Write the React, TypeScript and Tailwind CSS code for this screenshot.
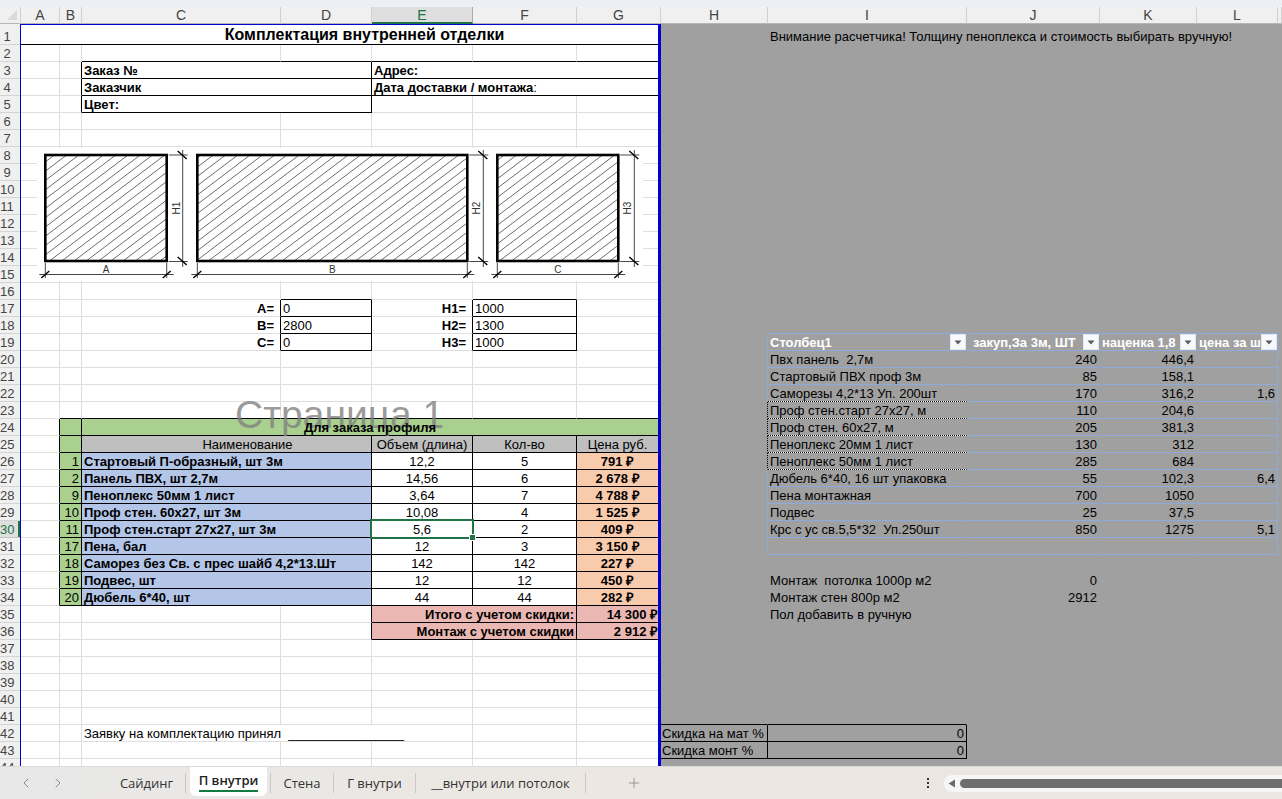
import type { ReactNode } from 'react';
import { ChevronLeft, ChevronRight, Plus } from 'lucide-react';
import { twMerge } from 'tailwind-merge';

const COLUMNS = ['A', 'B', 'C', 'D', 'E', 'F', 'G', 'H', 'I', 'J', 'K', 'L', 'M'];
const COLUMN_WIDTHS = [
  'w-[39px]',
  'w-[22px]',
  'w-[199px]',
  'w-[91px]',
  'w-[101px]',
  'w-[104px]',
  'w-[84px]',
  'w-[107px]',
  'w-[199px]',
  'w-[133px]',
  'w-[97px]',
  'w-[81px]',
  'w-auto',
];
const ROW_COUNT = 44;
const LAST_PRINT_COLUMN = COLUMNS.indexOf('G');

// anchor cell -> number of columns it covers
const MERGES: Record<string, number> = {
  A1: 7,
  I1: 4,
  C3: 2,
  E3: 3,
  C4: 2,
  E4: 3,
  C5: 2,
  C24: 5,
  E35: 2,
  E36: 2,
  C42: 3,
};
for (let row = 25; row <= 34; row++) MERGES[`C${row}`] = 2;

const DOTTED =
  'border-b-black [border-bottom-style:dotted] bg-[linear-gradient(#fff,#fff)] bg-origin-border bg-bottom bg-no-repeat bg-[length:100%_1px]';

// range -> classes, later rules win
const FORMATS: [string, string][] = [
  ['A1:A1', 'border-b-black pl-[52px] text-center align-top text-base leading-[18px] font-bold'],
  ['H1:M1', 'align-bottom'],
  ['C2:G2', 'border-b-black'],
  ['B3:B5', 'border-r-black'],
  ['C3:C5', 'border-b-black border-r-black font-bold'],
  ['E3:E4', 'border-b-black font-bold'],
  ['C17:C19', 'border-r-black pr-[6px] text-right font-bold'],
  ['E17:E19', 'border-r-black pr-[6px] text-right font-bold'],
  ['D16:D16', 'border-b-black'],
  ['F16:F16', 'border-b-black'],
  ['D17:D19', 'border-r-black border-b-black'],
  ['F17:F19', 'border-r-black border-b-black'],
  ['B23:G23', 'border-b-black'],
  ['A24:A34', 'border-r-black'],
  ['B24:B34', 'border-r-black border-b-black bg-[#a9d08e] text-right'],
  ['C24:C24', 'border-b-black bg-[#a9d08e] text-center font-bold'],
  ['C25:G25', 'border-r-black border-b-black bg-[#bfbfbf] text-center'],
  ['C25:C25', 'pl-11'],
  ['C26:C34', 'border-r-black border-b-black bg-[#b4c6e7] font-bold'],
  ['E26:F34', 'border-r-black border-b-black text-center'],
  ['G26:G34', 'border-b-black bg-[#f8cbad] text-center font-bold'],
  ['D35:D36', 'border-r-black'],
  ['E35:G36', 'border-r-black border-b-black bg-[#ebb7b2] text-right font-bold'],
  ['G35:G36', 'pr-0'],
  ['H19:H31', 'border-r-[#8ea9db]'],
  ['I18:L31', 'border-b-[#8ea9db]'],
  ['L19:L31', 'border-r-[#8ea9db]'],
  ['I19:L19', 'pt-0 font-bold text-white'],
  ['J19:J19', 'pl-[6px]'],
  ['J20:L34', 'text-right'],
  ['I22:I26', DOTTED],
  ['H23:H26', 'border-r-black [border-right-style:dotted]'],
  ['H41:I41', 'border-b-black'],
  ['H42:I43', 'border-r-black border-b-black'],
  ['H42:H43', 'px-px'],
  ['I42:I43', 'text-right'],
];

const VALUES: Record<string, ReactNode> = {
  A1: 'Комплектация внутренней отделки',
  I1: 'Внимание расчетчика! Толщину пеноплекса и стоимость выбирать вручную!',
  C3: 'Заказ №',
  C4: 'Заказчик',
  C5: 'Цвет:',
  E3: 'Адрес:',
  E4: (
    <>
      Дата доставки / монтажа<span className="font-normal">:</span>
    </>
  ),
  C17: 'A=',
  C18: 'B=',
  C19: 'C=',
  D17: '0',
  D18: '2800',
  D19: '0',
  E17: 'H1=',
  E18: 'H2=',
  E19: 'H3=',
  F17: '1000',
  F18: '1300',
  F19: '1000',
  C24: <span className="relative z-10">Для заказа профиля</span>,
  C25: 'Наименование',
  E25: 'Объем (длина)',
  F25: 'Кол-во',
  G25: 'Цена руб.',
  E35: 'Итого с учетом скидки:',
  G35: '14 300 ₽',
  E36: 'Монтаж с учетом скидки',
  G36: '2 912 ₽',
  C42: 'Заявку на комплектацию принял  ________________',
  H42: 'Скидка на мат %',
  I42: '0',
  H43: 'Скидка монт %',
  I43: '0',
  I19: <FilterHeader label="Столбец1" />,
  J19: <FilterHeader label="закуп,За 3м, ШТ" />,
  K19: <FilterHeader label="наценка 1,8" />,
  L19: <FilterHeader label="цена за шт" />,
};

function fill(startColumn: string, startRow: number, rows: string[][]) {
  const first = COLUMNS.indexOf(startColumn);
  rows.forEach((row, y) =>
    row.forEach((value, x) => {
      if (value) VALUES[`${COLUMNS[first + x]}${startRow + y}`] = value;
    }),
  );
}

fill('B', 26, [
  ['1', 'Стартовый П-образный, шт 3м', '', '12,2', '5', '791 ₽'],
  ['2', 'Панель ПВХ, шт 2,7м', '', '14,56', '6', '2 678 ₽'],
  ['9', 'Пеноплекс 50мм 1 лист', '', '3,64', '7', '4 788 ₽'],
  ['10', 'Проф стен. 60х27, шт 3м', '', '10,08', '4', '1 525 ₽'],
  ['11', 'Проф стен.старт 27х27, шт 3м', '', '5,6', '2', '409 ₽'],
  ['17', 'Пена, бал', '', '12', '3', '3 150 ₽'],
  ['18', 'Саморез без Св. с прес шайб 4,2*13.Шт', '', '142', '142', '227 ₽'],
  ['19', 'Подвес, шт', '', '12', '12', '450 ₽'],
  ['20', 'Дюбель 6*40, шт', '', '44', '44', '282 ₽'],
]);

fill('I', 20, [
  ['Пвх панель  2,7м', '240', '446,4', ''],
  ['Стартовый ПВХ проф 3м', '85', '158,1', ''],
  ['Саморезы 4,2*13 Уп. 200шт', '170', '316,2', '1,6'],
  ['Проф стен.старт 27х27, м', '110', '204,6', ''],
  ['Проф стен. 60х27, м', '205', '381,3', ''],
  ['Пеноплекс 20мм 1 лист', '130', '312', ''],
  ['Пеноплекс 50мм 1 лист', '285', '684', ''],
  ['Дюбель 6*40, 16 шт упаковка', '55', '102,3', '6,4'],
  ['Пена монтажная', '700', '1050', ''],
  ['Подвес', '25', '37,5', ''],
  ['Крс с ус св.5,5*32  Уп.250шт', '850', '1275', '5,1'],
]);

fill('I', 33, [
  ['Монтаж  потолка 1000р м2', '0'],
  ['Монтаж стен 800р м2', '2912'],
  ['Пол добавить в ручную', ''],
]);

function inRange(range: string, column: number, row: number) {
  const [from, to] = range.split(':');
  return (
    column >= COLUMNS.indexOf(from[0]) &&
    column <= COLUMNS.indexOf(to[0]) &&
    row >= Number(from.slice(1)) &&
    row <= Number(to.slice(1))
  );
}

function cellClass(column: number, row: number, span: number) {
  const rules = FORMATS.filter(([range]) => inRange(range, column, row)).map(([, classes]) => classes);
  const inPrintArea = column <= LAST_PRINT_COLUMN;
  return twMerge(
    'overflow-hidden border-r border-b px-0.5 pt-0.5 pb-0 leading-[14px] whitespace-pre',
    inPrintArea ? 'border-[#dedede] bg-white' : 'border-[#a0a0a0] bg-[#a0a0a0]',
    ...rules,
    column + span - 1 === LAST_PRINT_COLUMN && 'border-r-[3px] border-r-[#0000d4]',
  );
}

function FilterHeader({ label }: { label: string }) {
  return (
    <div className="flex h-4 items-center justify-between">
      <span className="min-w-0 overflow-hidden pt-0.5">{label}</span>
      <button
        type="button"
        aria-label={label}
        className="-mr-0.5 flex h-4 w-4 shrink-0 items-center justify-center border border-[#e3e6ee] bg-[#f8f9fc]"
      >
        <svg width="8" height="5" viewBox="0 0 8 5" aria-hidden="true">
          <path d="M0.5 0.5h7L4 4.5z" fill="#5a5a5a" />
        </svg>
      </button>
    </div>
  );
}

function ActiveCell({ children }: { children: ReactNode }) {
  return (
    <div className="relative pt-0.5">
      {children}
      <div className="absolute -inset-0.5 z-10 border-2 border-[#217346]">
        <div className="absolute -right-1 -bottom-1 h-[7px] w-[7px] border border-white bg-[#217346]" />
      </div>
    </div>
  );
}

interface WallProps {
  id: string;
  left: number;
  right: number;
  hatch: number;
  label: string;
  heightLabel: string;
}

const WALLS: WallProps[] = [
  { id: 'wall-a', left: 45.3, right: 166.7, hatch: 4.1, label: 'A', heightLabel: 'H1' },
  { id: 'wall-b', left: 197.3, right: 467.3, hatch: 11, label: 'B', heightLabel: 'H2' },
  { id: 'wall-c', left: 497.3, right: 618.3, hatch: 2, label: 'C', heightLabel: 'H3' },
];

function Wall({ id, left, right, hatch, label, heightLabel }: WallProps) {
  const top = 155;
  const bottom = 261;
  const step = 12.27;
  const run = 140;
  const dimX = right + 16;
  const dimY = 274.5;
  const count = Math.ceil((right - left + run) / step);
  return (
    <g>
      <clipPath id={id}>
        <rect x={left} y={top} width={right - left} height={bottom - top} />
      </clipPath>
      <g clipPath={`url(#${id})`} stroke="#5c5c5c" strokeWidth="0.9">
        {Array.from({ length: count }, (_, i) => {
          const x = left - run + ((hatch + run) % step) + i * step;
          return <line key={i} x1={x} y1={bottom} x2={x + run} y2={top} />;
        })}
      </g>
      <rect x={left} y={top} width={right - left} height={bottom - top} fill="none" stroke="#000" strokeWidth="2.6" />
      <g stroke="#333" strokeWidth="0.9">
        <path d={`M${left - 6} ${dimY}H${right + 7}M${left} 263V278M${right} 263V278`} />
        <path d={`M${dimX} 150V267M${right + 2} ${top}H${dimX + 5}M${right + 2} 261.5H${dimX + 5}`} />
      </g>
      <g stroke="#000" strokeWidth="1.4">
        <path d={`M${left - 4} 278L${left + 4} 271M${right - 4} 278L${right + 4} 271`} />
        <path d={`M${dimX - 5} 151L${dimX + 4} 159M${dimX - 5} 257L${dimX + 4} 265`} />
      </g>
      <g fill="#333" fontSize="10" textAnchor="middle">
        <text x={(left + right) / 2} y="273">
          {label}
        </text>
        <text x={dimX - 3} y="208" transform={`rotate(-90 ${dimX - 3} 208)`}>
          {heightLabel}
        </text>
      </g>
    </g>
  );
}

function WallsDrawing() {
  return (
    <svg
      className="absolute top-[141px] left-[37px] bg-white"
      width="606"
      height="133"
      viewBox="37 148 606 133"
      role="img"
      aria-label="A B C"
    >
      {WALLS.map((wall) => (
        <Wall key={wall.id} {...wall} />
      ))}
    </svg>
  );
}

function ColumnHeaders() {
  return (
    <thead>
      <tr>
        <th className="h-[17px] border-r border-b border-r-[#d0d0d0] border-b-[#b5b5b5] bg-[#f0f0f0] p-0">
          <svg className="ml-[7px]" width="10" height="10" viewBox="0 0 10 10" aria-hidden="true">
            <path d="M10 0v10H0z" fill="#d9d9d9" />
          </svg>
        </th>
        {COLUMNS.map((name) => (
          <th
            key={name}
            scope="col"
            className={
              name === 'E'
                ? 'h-[17px] border-r border-b-2 border-r-[#ababab] border-b-[#217346] bg-[#dfdfdf] p-0 pt-0.5 text-sm leading-[13px] font-normal text-[#217346]'
                : 'h-[17px] border-r border-b border-r-[#d0d0d0] border-b-[#b5b5b5] bg-[#f0f0f0] p-0 pt-px text-sm leading-[15px] font-normal text-[#444]'
            }
          >
            {name === 'M' ? '' : name}
          </th>
        ))}
      </tr>
    </thead>
  );
}

function Row({ row }: { row: number }) {
  const cells: ReactNode[] = [];
  for (let column = 0; column < COLUMNS.length; ) {
    const address = `${COLUMNS[column]}${row}`;
    const span = MERGES[address] ?? 1;
    const value = VALUES[address];
    cells.push(
      <td
        key={address}
        colSpan={span}
        className={twMerge(cellClass(column, row, span), address === 'E30' && 'overflow-visible p-0')}
      >
        {address === 'E30' ? <ActiveCell>{value}</ActiveCell> : value}
      </td>,
    );
    column += span;
  }
  return (
    <tr className={row === 1 ? 'h-[21px]' : 'h-[17px]'}>
      <th
        scope="row"
        className={
          row === 30
            ? 'border-r border-b border-r-[#0000d4] border-b-[#c4c4c4] bg-[#dfdfdf] p-0 pt-0.5 pr-[6px] align-bottom leading-[14px] font-normal text-[#217346] shadow-[inset_-2px_0_0_#217346]'
            : 'border-r border-b border-r-[#0000d4] border-b-[#d4d4d4] bg-[#f0f0f0] p-0 pt-0.5 pr-[6px] align-bottom leading-[14px] font-normal text-[#444]'
        }
      >
        {row}
      </th>
      {cells}
    </tr>
  );
}

function Sheet() {
  return (
    <div className="relative min-h-0 flex-1 overflow-hidden bg-[#a0a0a0]">
      <table className="w-full min-w-[1278px] table-fixed border-separate border-spacing-0 text-[13px]">
        <colgroup>
          <col className="w-[21px]" />
          {COLUMN_WIDTHS.map((width, i) => (
            <col key={COLUMNS[i]} className={width} />
          ))}
        </colgroup>
        <ColumnHeaders />
        <tbody>
          {Array.from({ length: ROW_COUNT }, (_, i) => (
            <Row key={i} row={i + 1} />
          ))}
        </tbody>
      </table>
      <WallsDrawing />
      <div className="pointer-events-none absolute top-[386px] left-[235px] text-[39px] leading-[44px] whitespace-nowrap text-[#808080]/80">
        Страница 1
      </div>
      {/* print area outline */}
      <div className="pointer-events-none absolute top-[17px] bottom-0 left-5 w-[641px] border-t border-r-[3px] border-l border-[#0000d4]" />
    </div>
  );
}

function SheetTabs() {
  const tab = 'h-5 border-r border-[#cbc8c4] text-[#333]';
  return (
    <footer className="flex h-[33px] shrink-0 items-center border-t border-[#dcdad7] bg-linear-to-r from-[#e8e8e8] via-[#ece7e1] to-[#ebe6df] font-['Open_Sans','Noto_Sans',sans-serif] text-[13px] leading-4">
      <button type="button" aria-label="Предыдущий лист" className="ml-[18px] text-[#8a8a8a]">
        <ChevronLeft className="h-4 w-4" strokeWidth={1.5} />
      </button>
      <button type="button" aria-label="Следующий лист" className="ml-4 text-[#8a8a8a]">
        <ChevronRight className="h-4 w-4" strokeWidth={1.5} />
      </button>
      <nav className="ml-[42px] flex h-full items-center">
        <button type="button" className={`${tab} w-[78px]`}>
          Сайдинг
        </button>
        <button
          type="button"
          className="mr-[3px] ml-1 flex h-[29px] w-[77px] items-center justify-center self-start rounded-b-md bg-white font-semibold text-[#222]"
        >
          <span className="border-b-2 border-[#107c41] pb-0.5">П внутри</span>
        </button>
        <button type="button" className={`${tab} w-[64px] border-l`}>
          Стена
        </button>
        <button type="button" className={`${tab} w-[82px]`}>
          Г внутри
        </button>
        <button type="button" className={`${tab} w-[170px]`}>
          __внутри или потолок
        </button>
      </nav>
      <button type="button" aria-label="Новый лист" className="ml-10 text-[#8a8a8a]">
        <Plus className="h-4 w-4" strokeWidth={1.25} />
      </button>
      <div className="ml-auto flex w-[356px] items-center">
        <svg width="4" height="12" viewBox="0 0 4 12" aria-hidden="true">
          <path d="M1 1h2v2H1zM1 5h2v2H1zM1 9h2v2H1z" fill="#333" />
        </svg>
        <div className="ml-[14px] flex h-[17px] flex-1 items-center rounded-l-lg bg-[#f6f6f6]">
          <button type="button" aria-label="Прокрутить влево" className="ml-1">
            <svg width="8" height="9" viewBox="0 0 8 9" aria-hidden="true">
              <path d="M7 0.5v8L0.5 4.5z" fill="#6e6e6e" />
            </svg>
          </button>
          <div className="ml-1 h-[9px] flex-1 rounded-l-full bg-[#6e6e6e]" />
        </div>
      </div>
    </footer>
  );
}

export default function App() {
  return (
    <div className="flex h-screen flex-col overflow-hidden bg-[#eceff5] pt-[7px] font-['Liberation_Sans',Arial,sans-serif] text-black">
      <Sheet />
      <SheetTabs />
    </div>
  );
}
